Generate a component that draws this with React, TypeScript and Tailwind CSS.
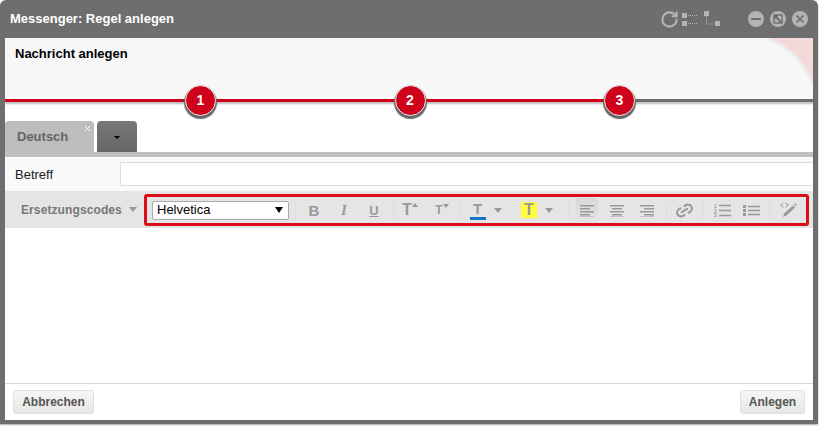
import { Link2, RotateCw, X } from 'lucide-react';

function Caret({ className = 'border-x-[4px] border-t-[5px] border-t-[#999]' }: { className?: string }) {
  return <span className={`block shrink-0 w-0 h-0 border-x-transparent ${className}`} />;
}

function Step({ n }: { n: number }) {
  return (
    <div className="w-[31px] h-[31px] rounded-full bg-[#d0021b] border-[1px] border-[#e8e8e8] shadow-[0_2px_1px_1px_#666] flex items-center justify-center text-white text-[14px] font-bold">
      {n}
    </div>
  );
}

function AlignIcon({ align }: { align: 'left' | 'center' | 'right' }) {
  const x = align === 'left' ? 0 : align === 'center' ? 2 : 4;
  return (
    <svg width="14" height="13" viewBox="0 0 14 13" className="block shrink-0">
      <rect x="0" y="1" width="14" height="1.5" fill="#999" />
      <rect x={x} y="4" width="10" height="1.5" fill="#999" />
      <rect x="0" y="7" width="14" height="1.5" fill="#999" />
      <rect x={x} y="10" width="10" height="1.5" fill="#999" />
      <rect x="0" y="12.2" width="14" height="0.8" fill="#bbb" />
    </svg>
  );
}

function Sep({ className = '' }: { className?: string }) {
  return <span className={`block shrink-0 w-px h-[18px] bg-[#dedede] ${className}`} />;
}

export default function App() {
  return (
    <div className="w-[819px] h-[426px] bg-white font-['Liberation_Sans',sans-serif]">
      <div className="w-[818px] h-[424px] bg-[#6e6e6e] rounded-t-[6px] px-[5px] pb-[4px] flex flex-col shadow-[0_1px_2px_#aaa]">
        {/* Title bar */}
        <div className="h-[38px] shrink-0 flex items-center justify-between pr-[5px]">
          <span className="text-white text-[13px] font-bold pl-[5px]">Messenger: Regel anlegen</span>
          <div className="flex items-center text-[#b4b4b4]">
            <RotateCw className="w-[19px] h-[19px]" strokeWidth={2.6} />
            <svg width="38" height="18" viewBox="0 0 38 18" className="ml-[3px] block">
              <rect x="0" y="3" width="5" height="5" fill="#b4b4b4" />
              <rect x="0" y="11" width="5" height="5" fill="#b4b4b4" />
              <path d="M6 5.5h10M6 13.5h10" stroke="#b4b4b4" strokeDasharray="1 1" />
              <rect x="22" y="1" width="5" height="5" fill="#b4b4b4" />
              <rect x="33" y="11" width="5" height="5" fill="#b4b4b4" />
              <path d="M24.5 6v8h8" stroke="#b4b4b4" strokeDasharray="1 1" fill="none" />
            </svg>
            <div className="flex items-center gap-[6px] ml-[28px]">
              <span className="w-4 h-4 rounded-full bg-[#b4b4b4] flex items-center justify-center">
                <span className="w-[10px] h-[2px] bg-[#6e6e6e]" />
              </span>
              <svg width="16" height="16" viewBox="0 0 16 16" className="block">
                <circle cx="8" cy="8" r="8" fill="#b4b4b4" />
                <rect x="4" y="4" width="8" height="8" fill="none" stroke="#6e6e6e" strokeWidth="1.4" />
                <path d="M4 4h5L4 9Z" fill="#6e6e6e" />
                <path d="M4.5 4.5L11.5 11.5" stroke="#6e6e6e" strokeWidth="2" />
              </svg>
              <span className="w-4 h-4 rounded-full bg-[#b4b4b4] flex items-center justify-center">
                <X className="w-3 h-3 text-[#6e6e6e]" strokeWidth={3.5} />
              </span>
            </div>
          </div>
        </div>

        {/* Content */}
        <div className="flex-1 bg-white flex flex-col min-h-0 overflow-hidden">
          {/* Step header */}
          <div className="relative h-[67px] shrink-0">
            <div className="h-[61px] bg-[#f7f7f7] relative overflow-hidden pl-[10px] pt-[9px]">
              <span className="block text-[13px] leading-none font-bold text-black">Nachricht anlegen</span>
              <svg width="46" height="46" viewBox="0 0 46 46" className="absolute right-0 top-0">
                <path d="M0 0H46V46C38 26 22 8 0 0Z" fill="#f5d9d9" />
                <path d="M0 0C22 8 38 26 46 46" stroke="#ececec" strokeWidth="3" fill="none" />
              </svg>
            </div>
            <div className="absolute left-0 right-0 top-[61px] h-[3px] bg-[linear-gradient(90deg,#d0021b_0,#d0021b_610px,#6e6e6e_610px,#6e6e6e_100%)] shadow-[0_2px_2px_#bbb]" />
            <div className="absolute top-[47px] left-[180px] flex gap-[178.5px]">
              <Step n={1} />
              <Step n={2} />
              <Step n={3} />
            </div>
          </div>

          {/* Tabs */}
          <div className="h-[16px] shrink-0" />
          <div className="flex gap-[3px] h-[31px] shrink-0 items-end">
            <div className="relative w-[89px] h-[31px] bg-[#bdbdbd] rounded-t-[4px] flex items-center pl-[12px] text-[13px] font-bold text-[#666]">
              Deutsch
              <X className="absolute right-[2px] top-[3px] w-[9px] h-[9px] text-white" strokeWidth={2.5} />
            </div>
            <div className="w-[40px] h-[31px] bg-[linear-gradient(#777,#666)] rounded-t-[4px] flex items-center justify-center pt-[2px]">
              <Caret className="border-x-[3px] border-t-[3px] border-t-black" />
            </div>
          </div>
          <div className="h-[5px] shrink-0 bg-[#c0c0c0]" />

          {/* Betreff */}
          <div className="h-[34px] shrink-0 bg-[#fafafa] flex items-center pl-[10px]">
            <label className="w-[105px] pt-[1px] text-[13px] text-[#222]">Betreff</label>
            <input className="flex-1 h-[24px] border border-[#dcdcdc] border-r-0 bg-white" />
          </div>

          {/* Toolbar */}
          <div className="h-[37px] shrink-0 bg-[#e5e5e5] flex items-center">
            <div className="w-[139px] shrink-0 flex items-center pl-[16px]">
              <span className="text-[12px] font-bold text-[#777] tracking-[0.1px]">Ersetzungscodes</span>
              <Caret className="ml-[7px] border-x-[4px] border-t-[5px] border-t-[#999]" />
            </div>
            <div className="w-[665px] h-[32px] mt-[1px] border-[3px] border-[#dc0d17] rounded-[3px] flex items-center pl-[5px]">
              <div className="w-[137px] h-[19px] shrink-0 bg-white border border-[#aaa] rounded-[2px] flex items-center justify-between pl-[4px] pr-[5px] text-[13px] text-black">
                Helvetica
                <Caret className="border-x-[4px] border-t-[6px] border-t-black" />
              </div>
              <Sep className="ml-[6px]" />
              <span className="ml-[3px] w-[30px] text-center text-[15px] leading-none font-bold text-[#999]">B</span>
              <span className="w-[30px] text-center text-[15px] leading-none font-bold italic text-[#999] font-['Liberation_Serif',serif]">I</span>
              <span className="w-[30px] text-center text-[13px] leading-none font-bold underline text-[#999]">U</span>
              <Sep className="ml-[4px]" />
              <span className="w-[32px] flex justify-center items-start text-[#999] font-bold text-[16px] leading-none">
                T<span className="block mt-[1px] w-0 h-0 border-x-[3px] border-x-transparent border-b-[4px] border-b-[#999]" />
              </span>
              <span className="w-[32px] flex justify-center items-start text-[#999] font-bold text-[12px] leading-none">
                T<span className="block w-0 h-0 border-x-[3px] border-x-transparent border-t-[4px] border-t-[#999]" />
              </span>
              <Sep className="ml-[2px]" />
              <span className="w-[33px] flex flex-col items-center text-[#999] font-bold text-[15px] leading-none">
                T<span className="block w-[16px] h-[3px] bg-[#1a73c4] mt-[1px]" />
              </span>
              <Caret />
              <span className="ml-[19px] w-[16px] h-[16px] shrink-0 bg-[#ffff3c] flex items-center justify-center text-[#999] font-bold text-[16px] leading-none">T</span>
              <Caret className="ml-[8px] border-x-[4px] border-t-[5px] border-t-[#999]" />
              <Sep className="ml-[15px]" />
              <span className="ml-[7px] w-[22px] h-[24px] shrink-0 bg-[linear-gradient(#d8d8d8,#e5e5e5)] rounded-[2px] flex items-center justify-center">
                <AlignIcon align="left" />
              </span>
              <span className="ml-[12px]"><AlignIcon align="center" /></span>
              <span className="ml-[16px]"><AlignIcon align="right" /></span>
              <Sep className="ml-[12px]" />
              <Link2 className="ml-[8px] shrink-0 w-[19px] h-[19px] text-[#999] -rotate-[30deg]" strokeWidth={2.6} />
              <Sep className="ml-[9px]" />
              <svg width="17" height="14" viewBox="0 0 17 14" className="ml-[10px] block shrink-0">
                <g fill="#999" fontSize="5" fontFamily="Liberation Sans" fontWeight="bold">
                  <text x="0" y="4.5">1</text>
                  <text x="0" y="9.5">2</text>
                  <text x="0" y="14">3</text>
                </g>
                <path d="M5 2.5h12M5 7.5h12M5 12.5h12" stroke="#999" strokeWidth="1.6" />
              </svg>
              <svg width="17" height="13" viewBox="0 0 17 13" className="ml-[12px] block shrink-0">
                <path d="M0 1h3v3H0zM0 5h3v3H0zM0 9h3v3H0z" fill="#999" />
                <path d="M5 2.5h12M5 6.5h12M5 10.5h12" stroke="#999" strokeWidth="1.6" />
              </svg>
              <Sep className="ml-[9px]" />
              <svg width="17" height="16" viewBox="0 0 17 16" className="ml-[10px] block shrink-0">
                <path d="M3.5 1L0.5 3.2L3.5 5.4M5.5 1L8.5 3.2L5.5 5.4" stroke="#999" strokeWidth="1" fill="none" />
                <path d="M3 15L4.2 11.5L13 3.5L15 5.5L6.5 13.5Z" fill="#999" />
                <path d="M14 2.5l1.2-1.2 1.6 1.6-1.2 1.2z" fill="#999" />
              </svg>
            </div>
          </div>

          {/* Editor */}
          <div className="flex-1 bg-white border-b border-[#d8d8d8]" />

          {/* Footer */}
          <div className="h-[36px] shrink-0 bg-white flex items-center justify-between px-[8px]">
            <button className="w-[81px] h-[24px] bg-[linear-gradient(#f6f6f6,#e6e6e6)] border border-[#dfdfdf] rounded-[3px] text-[12px] font-bold text-[#555]">
              Abbrechen
            </button>
            <button className="w-[65px] h-[24px] bg-[linear-gradient(#f6f6f6,#e6e6e6)] border border-[#dfdfdf] rounded-[3px] text-[12px] font-bold text-[#555]">
              Anlegen
            </button>
          </div>
        </div>
      </div>
    </div>
  );
}
